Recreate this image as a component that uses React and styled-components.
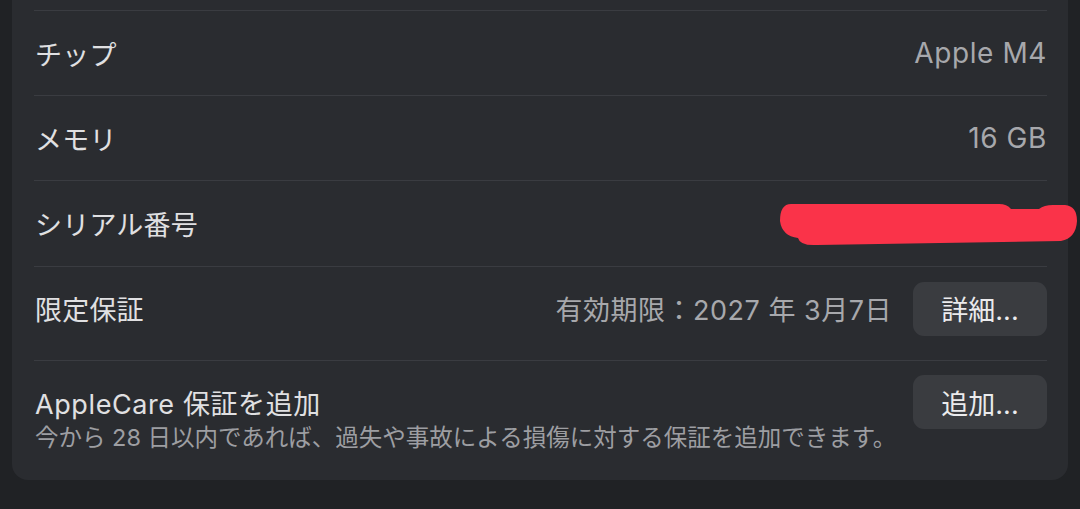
import styled, { createGlobalStyle } from "styled-components";

const GlobalStyle = createGlobalStyle`
  html, body {
    margin: 0;
    background: #202225;
  }
  body {
    font-family: Inter, "Noto Sans CJK JP", sans-serif;
    -webkit-font-smoothing: antialiased;
  }
`;

const Page = styled.div`
  padding: 0 12px 29px;
  height: 509px;
  box-sizing: border-box;
  overflow: hidden;
`;

const Card = styled.div`
  background: #2a2c30;
  border-radius: 0 0 16px 16px;
  padding: 10px 21px 0 22px;
`;

const Row = styled.div`
  position: relative;
  display: flex;
  align-items: ${(p) => (p.$top ? "flex-start" : "center")};
  box-sizing: border-box;
  height: ${(p) => p.$h}px;
  padding: ${(p) => p.$pad || "0"};
  border-top: 1px solid #3a3c41;
`;

const Label = styled.div`
  flex: 1;
  font-size: 27px;
  color: #e0e0e2;
  padding-left: 1px;
  letter-spacing: 0.2px;
`;

const Value = styled.div`
  font-size: ${(p) => (p.$gap ? "27px" : "28px")};
  color: #a7a8ac;
  letter-spacing: ${(p) => (p.$gap ? "0.5px" : "0.6px")};
  margin-right: ${(p) => (p.$gap ? "21px" : "0")};
  white-space: pre;
`;

const Button = styled.div`
  width: 134px;
  height: 54px;
  border-radius: 11px;
  background: #3a3c40;
  color: #ebebed;
  font-size: 27px;
  display: flex;
  align-items: center;
  justify-content: center;
  flex-shrink: 0;
`;

const TextCol = styled.div`
  flex: 1;
  display: flex;
  flex-direction: column;
  padding-top: 13px;
`;

const Title = styled.div`
  font-size: 27px;
  line-height: 34px;
  color: #e0e0e2;
  padding-left: 1px;
  letter-spacing: 0.6px;
`;

const Sub = styled.div`
  font-size: 23.5px;
  line-height: 31px;
  color: #9d9ea2;
  padding-left: 1px;
  white-space: nowrap;
`;

const Redaction = styled.svg`
  position: absolute;
  top: 19px;
  right: -32px;
  width: 302px;
  height: 48px;
`;

function Scribble() {
  return (
    <Redaction viewBox="0 0 302 48">
      <path
        d="M14 4 L222 4 Q230 4 234 9 L262 9 Q267 5 276 5 L288 5 Q300 6 300 21 Q299 38 284 41 L40 45 Q23 46 21 38 Q5 36 3 21 Q3 4 14 4 Z"
        fill="#fa3349"
      />
    </Redaction>
  );
}

export default function App() {
  return (
    <>
      <GlobalStyle />
      <Page>
        <Card>
          <Row $h={85}>
            <Label>チップ</Label>
            <Value>Apple M4</Value>
          </Row>
          <Row $h={85}>
            <Label>メモリ</Label>
            <Value>16 GB</Value>
          </Row>
          <Row $h={86}>
            <Label>シリアル番号</Label>
            <Scribble />
          </Row>
          <Row $h={94} $pad="0 0 10px">
            <Label>限定保証</Label>
            <Value $gap>有効期限：2027 年 3月7日</Value>
            <Button>詳細...</Button>
          </Row>
          <Row $h={120} $top $pad="14px 0 0">
            <TextCol>
              <Title>AppleCare 保証を追加</Title>
              <Sub>今から 28 日以内であれば、過失や事故による損傷に対する保証を追加できます。</Sub>
            </TextCol>
            <Button>追加...</Button>
          </Row>
        </Card>
      </Page>
    </>
  );
}
